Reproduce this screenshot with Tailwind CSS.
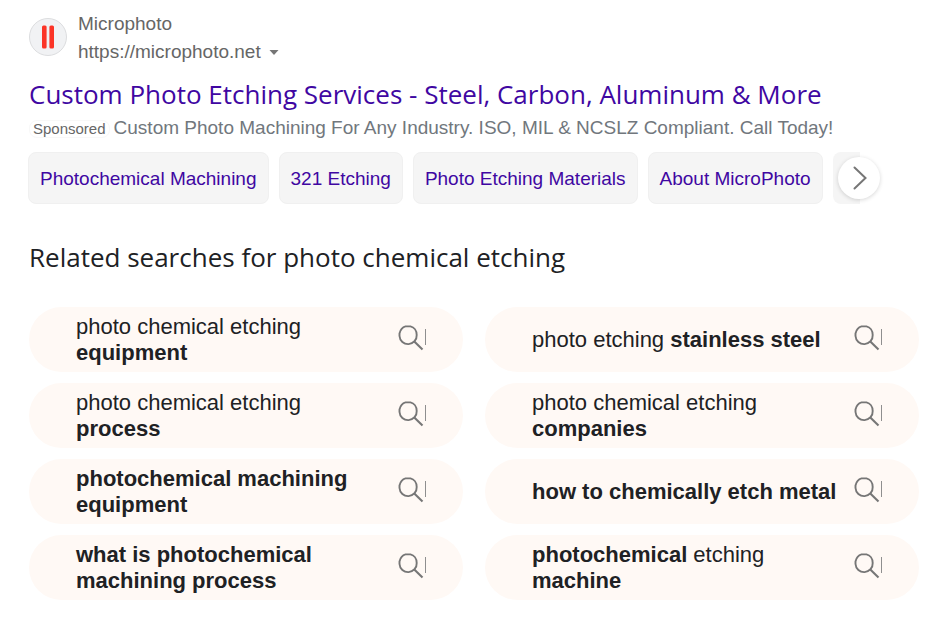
<!DOCTYPE html>
<html lang="en">
<head>
<meta charset="utf-8">
<meta name="viewport" content="width=device-width, initial-scale=1">
<title>photo chemical etching - Search</title>
<script src="https://cdn.jsdelivr.net/npm/@tailwindcss/browser@4"></script>
</head>
<body class="bg-white font-['Liberation_Sans',Arial,sans-serif] text-[#202124]">
<svg class="hidden" aria-hidden="true">
  <symbol id="search" viewBox="0 0 28 30">
    <g fill="none" stroke="#767676">
      <path d="M7.500 1.400h5C16 2.200 18.700 5.500 18.700 10a8.600 8.600 0 0 1-17.200 1V8.500C2.300 5 4.500 2.200 7.500 1.400Z" stroke-width="1.900"/>
      <path d="M16.300 16.500 24.500 24.500" stroke-width="2.100"/>
      <path d="M27.500 4v16" stroke="#8f8f8f" stroke-width="1"/>
    </g>
  </symbol>
</svg>
<main class="pl-[29px] pr-3 pt-2.5 pb-4">
  <article>
    <div class="flex items-center gap-[11px]">
      <div class="flex size-[38px] items-center justify-center rounded-full border border-[#dcdddf] bg-[#f1f2f4] -mt-0.5">
        <svg class="h-6 w-3.5" viewBox="0 0 14 24" aria-hidden="true"><rect x="1" y="0.500" width="4.600" height="23" rx="1.500" fill="#fb3427"/><rect x="8.400" y="0.500" width="4.600" height="23" rx="1.500" fill="#fb3427"/></svg>
      </div>
      <div class="text-[19px] leading-7 text-[#666]">
        <div>Microphoto</div>
        <div class="flex items-center gap-2">
          <a href="#">https://microphoto.net</a>
          <button type="button" aria-label="Result options"><svg class="h-[5px] w-[10px]" viewBox="0 0 10 5"><path d="M0.500 0h9L5 5Z" fill="#767676"/></svg></button>
        </div>
      </div>
    </div>
    <h2 class="mt-2.5 whitespace-nowrap font-['Open_Sans','Noto_Sans',sans-serif] text-[26px] leading-9 text-[#4007a2]"><a href="#">Custom Photo Etching Services - Steel, Carbon, Aluminum &amp; More</a></h2>
    <p class="mt-1 flex items-baseline gap-1 whitespace-nowrap text-[19px] leading-6 text-[#71777d]"><span class="rounded-lg border border-[#f8f8f8] px-[3px] text-[15px] leading-4 text-[#666]">Sponsored</span><span>Custom Photo Machining For Any Industry. ISO, MIL &amp; NCSLZ Compliant. Call Today!</span></p>
    <nav class="relative mt-3 flex w-[832px] gap-2.5 whitespace-nowrap text-[19px] leading-12 text-[#4007a2] -ml-px" aria-label="Site links">
      <a href="#" class="rounded-lg border border-[#f0f0f0] bg-[#f5f5f5] px-[11px] pt-0.5">Photochemical Machining</a>
      <a href="#" class="rounded-lg border border-[#f0f0f0] bg-[#f5f5f5] px-[11px] pt-0.5">321 Etching</a>
      <a href="#" class="rounded-lg border border-[#f0f0f0] bg-[#f5f5f5] px-[11px] pt-0.5">Photo Etching Materials</a>
      <a href="#" class="rounded-lg border border-[#f0f0f0] bg-[#f5f5f5] px-[11px] pt-0.5">About MicroPhoto</a>
      <a href="#" aria-label="More links" class="flex-1 rounded-l-lg bg-[#f5f5f5]"></a>
      <button type="button" aria-label="Next" class="absolute -right-5 top-[5px] flex size-[42px] items-center justify-center rounded-full bg-white pl-0.5 shadow-[0_1px_4px_rgba(0,0,0,0.16)]"><svg class="h-6 w-3.5" viewBox="0 0 14 24" fill="none" stroke="#767676" stroke-width="2" stroke-linecap="round"><path d="M1.500 1.500 12.500 12 1.500 22.500"/></svg></button>
    </nav>
  </article>
  <section>
    <h2 class="mt-[35px] font-['Open_Sans','Noto_Sans',sans-serif] text-[26px] leading-9">Related searches for photo chemical etching</h2>
    <div class="mt-8 grid grid-cols-2 gap-x-[22px] gap-y-[11px] text-[22px] leading-[26px]">
      <a href="#" class="flex min-h-[65px] items-center justify-between rounded-[33px] bg-[#fff9f5] pl-[47px] pr-[37px]"><span class="max-w-[308px]">photo chemical etching<br><b>equipment</b></span><svg class="h-[30px] w-7 shrink-0"><use href="#search"/></svg></a>
      <a href="#" class="flex min-h-[65px] items-center justify-between rounded-[33px] bg-[#fff9f5] pl-[47px] pr-[37px]"><span class="max-w-[308px]">photo etching <b>stainless steel</b></span><svg class="h-[30px] w-7 shrink-0"><use href="#search"/></svg></a>
      <a href="#" class="flex min-h-[65px] items-center justify-between rounded-[33px] bg-[#fff9f5] pl-[47px] pr-[37px]"><span class="max-w-[308px]">photo chemical etching<br><b>process</b></span><svg class="h-[30px] w-7 shrink-0"><use href="#search"/></svg></a>
      <a href="#" class="flex min-h-[65px] items-center justify-between rounded-[33px] bg-[#fff9f5] pl-[47px] pr-[37px]"><span class="max-w-[308px]">photo chemical etching<br><b>companies</b></span><svg class="h-[30px] w-7 shrink-0"><use href="#search"/></svg></a>
      <a href="#" class="flex min-h-[65px] items-center justify-between rounded-[33px] bg-[#fff9f5] pl-[47px] pr-[37px]"><span class="max-w-[308px]"><b>photochemical machining<br>equipment</b></span><svg class="h-[30px] w-7 shrink-0"><use href="#search"/></svg></a>
      <a href="#" class="flex min-h-[65px] items-center justify-between rounded-[33px] bg-[#fff9f5] pl-[47px] pr-[37px]"><span class="max-w-[308px]"><b>how to chemically etch metal</b></span><svg class="h-[30px] w-7 shrink-0"><use href="#search"/></svg></a>
      <a href="#" class="flex min-h-[65px] items-center justify-between rounded-[33px] bg-[#fff9f5] pl-[47px] pr-[37px]"><span class="max-w-[308px]"><b>what is photochemical<br>machining process</b></span><svg class="h-[30px] w-7 shrink-0"><use href="#search"/></svg></a>
      <a href="#" class="flex min-h-[65px] items-center justify-between rounded-[33px] bg-[#fff9f5] pl-[47px] pr-[37px]"><span class="max-w-[308px]"><b>photochemical</b> etching<br><b>machine</b></span><svg class="h-[30px] w-7 shrink-0"><use href="#search"/></svg></a>
    </div>
  </section>
</main>
</body>
</html>
